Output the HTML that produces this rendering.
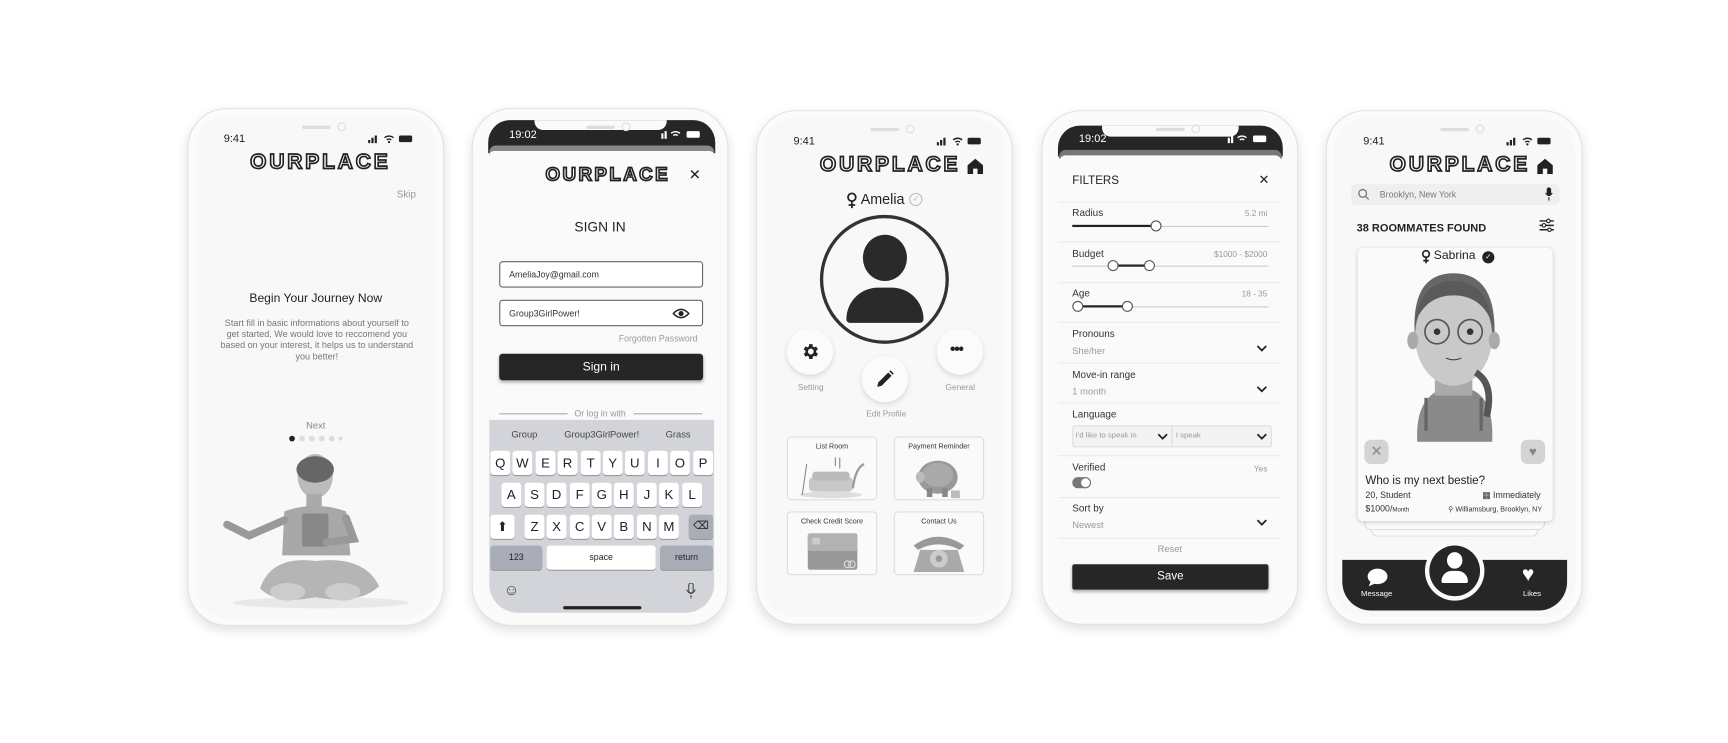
<!DOCTYPE html>
<html><head><meta charset="utf-8">
<style>
*{box-sizing:border-box;margin:0;padding:0}
html,body{width:1728px;height:743px;overflow:hidden;background:#fff;font-family:"Liberation Sans",sans-serif;color:#333}
#w{position:absolute;left:0;top:0;width:1568px;height:674px;transform:scale(1.10204);transform-origin:0 0}
.ph{position:absolute;top:98px;width:233px;height:470px;border-radius:36px;background:#f8f8f8;border:1px solid #e2e2e2;box-shadow:0 4px 10px rgba(0,0,0,.12),inset 0 0 0 6px #fbfbfb;overflow:hidden}
.a{position:absolute}
.t{position:absolute;white-space:nowrap}
.logo{position:absolute;font:900 19px "Liberation Sans",sans-serif;letter-spacing:2.6px;color:#fff;-webkit-text-stroke:1.5px #222}
.pill{position:absolute;top:15px;left:103px;width:26px;height:3px;border-radius:2px;background:#ddd}
.cam{position:absolute;top:12px;left:135px;width:8px;height:8px;border-radius:50%;border:1px solid #ddd}
.time{position:absolute;font-size:10px;color:#222}
.line{position:absolute;left:14px;right:14px;height:1px;background:#ebebeb}
.lbl{position:absolute;font-size:9px;color:#333}
.sub{position:absolute;font-size:9px;color:#999}
.val{position:absolute;font-size:7.5px;color:#999;right:27px}
.knob{position:absolute;width:10px;height:10px;border-radius:50%;background:#fff;border:1px solid #555}
.key{position:absolute;width:18px;height:22px;background:#fff;border-radius:3px;box-shadow:0 1px 0 #999;font-size:12px;text-align:center;line-height:22px;color:#222}
.card{position:absolute;width:82px;height:58px;border:1px solid #ddd;border-radius:4px;background:#fafafa;font-size:6.5px;text-align:center;color:#333;padding-top:5px}
.cb{position:absolute;width:42px;height:42px;border-radius:50%;background:#fbfbfb;box-shadow:0 2px 5px rgba(0,0,0,.13)}
</style></head><body><div id="w">

<!-- PHONE 1 -->
<div class="ph" style="left:170px">
 <div class="pill"></div><div class="cam"></div>
 <div class="time" style="left:32px;top:22px">9:41</div>
 <svg class="a" style="left:163px;top:23px" width="42" height="8"><rect x="0" y="5" width="2" height="3" fill="#222"/><rect x="3" y="3" width="2" height="5" fill="#222"/><rect x="6" y="1" width="2" height="7" fill="#222"/><path d="M15 3a6 6 0 0 1 8 0M17 5a3 3 0 0 1 4 0" stroke="#222" fill="none" stroke-width="1.3"/><circle cx="19" cy="7" r="1" fill="#222"/><rect x="28" y="1" width="12" height="6" rx="1.5" fill="#222"/></svg>
 <div class="logo" style="left:56px;top:38px">OURPLACE</div>
 <div class="t" style="left:189px;top:72px;font-size:9px;color:#999">Skip</div>
 <div class="t" style="left:0;width:231px;text-align:center;top:166px;font-size:11px;color:#222">Begin Your Journey Now</div>
 <div class="a" style="left:28px;width:177px;text-align:center;top:190px;font-size:8.2px;line-height:10px;color:#777">Start fill in basic informations about yourself to get started. We would love to reccomend you based on your interest, it helps us to understand you better!</div>
 <div class="t" style="left:0;width:231px;text-align:center;top:282px;font-size:8.5px;color:#888">Next</div>
 <svg class="a" style="left:90px;top:295px" width="50" height="8"><circle cx="4" cy="4" r="2.6" fill="#222"/><circle cx="13" cy="4" r="2.6" fill="#ddd"/><circle cx="22" cy="4" r="2.6" fill="#ddd"/><circle cx="31" cy="4" r="2.6" fill="#ddd"/><circle cx="40" cy="4" r="2.6" fill="#ddd"/><circle cx="48" cy="4" r="1.8" fill="#ddd"/></svg>
 <svg class="a" style="left:25px;top:305px" width="180" height="150">
  <ellipse cx="95" cy="143" rx="80" ry="5" fill="#e8e8e8"/>
  <ellipse cx="90" cy="28" rx="16" ry="20" fill="#bbb"/><ellipse cx="90" cy="22" rx="17" ry="12" fill="#666"/>
  <rect x="82" y="44" width="14" height="12" fill="#aaa"/>
  <path d="M62 60 Q90 50 118 60 L122 100 L60 100Z" fill="#a8a8a8"/>
  <rect x="78" y="62" width="24" height="30" rx="2" fill="#888"/>
  <path d="M62 68 L30 82 L10 72" stroke="#999" stroke-width="7" fill="none" stroke-linecap="round"/>
  <path d="M118 66 L125 85 L100 88" stroke="#999" stroke-width="7" fill="none" stroke-linecap="round"/>
  <path d="M40 130 Q50 100 90 105 Q135 100 148 128 Q130 145 90 138 Q55 145 40 130Z" fill="#b5b5b5"/>
  <ellipse cx="65" cy="133" rx="16" ry="8" fill="#ccc"/><ellipse cx="115" cy="133" rx="16" ry="8" fill="#ccc"/>
 </svg>
</div>

<!-- PHONE 2 -->
<div class="ph" style="left:428px;background:#fafafa">
 <div class="a" style="left:14px;top:10px;width:206px;height:30px;background:#262626;border-radius:20px 20px 0 0"></div>
 <div class="a" style="left:56px;top:10px;width:120px;height:9px;background:#fafafa;border-radius:0 0 8px 8px"></div>
 <div class="pill"></div><div class="cam"></div>
 <div class="time" style="left:33px;top:18px;color:#fff">19:02</div>
 <svg class="a" style="left:171px;top:19px" width="36" height="8"><rect x="0" y="3" width="2" height="5" fill="#fff"/><rect x="3" y="1" width="2" height="7" fill="#fff"/><path d="M9 3a6 6 0 0 1 8 0M11 5a3 3 0 0 1 4 0" stroke="#fff" fill="none" stroke-width="1.3"/><rect x="23" y="1" width="12" height="6" rx="1.5" fill="#fff"/></svg>
 <div class="a" style="left:15px;top:33px;width:204px;height:9px;background:#888;border-radius:6px 6px 0 0"></div>
 <div class="a" style="left:15px;top:38px;width:204px;height:420px;background:#fafafa;border-radius:4px 4px 0 0"></div>
 <div class="logo" style="left:66px;top:50px;font-size:17px;letter-spacing:2.2px">OURPLACE</div>
 <div class="t" style="left:196px;top:52px;font-size:13px;color:#222">✕</div>
 <div class="t" style="left:0;width:231px;text-align:center;top:100px;font-size:12.5px;color:#222">SIGN IN</div>
 <div class="a" style="left:24px;top:138px;width:185px;height:24px;border:1px solid #666;border-radius:3px;font-size:8px;padding:7px 8px;color:#333;background:#fff">AmeliaJoy@gmail.com</div>
 <div class="a" style="left:24px;top:173px;width:185px;height:24px;border:1px solid #666;border-radius:3px;font-size:8px;padding:7px 8px;color:#333;background:#fff">Group3GirlPower!</div>
 <svg class="a" style="left:181px;top:180px" width="16" height="11"><path d="M1 5.5Q8 -2 15 5.5Q8 13 1 5.5Z" fill="none" stroke="#222" stroke-width="1.4"/><circle cx="8" cy="5.5" r="2.3" fill="#222"/></svg>
 <div class="t" style="right:27px;top:204px;font-size:8px;color:#999">Forgotten Password</div>
 <div class="a" style="left:24px;top:222px;width:185px;height:24px;background:#262626;border-radius:3px;color:#fff;font-size:11px;text-align:center;line-height:24px;box-shadow:0 2px 3px rgba(0,0,0,.3)">Sign in</div>
 <div class="a" style="left:24px;top:276px;width:62px;height:1px;background:#aaa"></div>
 <div class="a" style="left:146px;top:276px;width:62px;height:1px;background:#aaa"></div>
 <div class="t" style="left:0;width:231px;text-align:center;top:272px;font-size:8px;color:#999">Or log in with</div>
 <div class="a" style="left:15px;top:282px;width:204px;height:175px;background:#d2d4d9;border-radius:0 0 26px 26px"></div>
 <div class="t" style="left:35px;top:290px;font-size:8.5px;color:#444">Group</div>
 <div class="t" style="left:83px;top:290px;font-size:8.5px;color:#444">Group3GirlPower!</div>
 <div class="t" style="left:175px;top:290px;font-size:8.5px;color:#444">Grass</div>
 <div class="key" style="left:16px;top:310px">Q</div><div class="key" style="left:36px;top:310px">W</div><div class="key" style="left:57px;top:310px">E</div><div class="key" style="left:77px;top:310px">R</div><div class="key" style="left:98px;top:310px">T</div><div class="key" style="left:118px;top:310px">Y</div><div class="key" style="left:138px;top:310px">U</div><div class="key" style="left:159px;top:310px">I</div><div class="key" style="left:179px;top:310px">O</div><div class="key" style="left:200px;top:310px">P</div>
 <div class="key" style="left:26px;top:339px">A</div><div class="key" style="left:47px;top:339px">S</div><div class="key" style="left:67px;top:339px">D</div><div class="key" style="left:88px;top:339px">F</div><div class="key" style="left:108px;top:339px">G</div><div class="key" style="left:128px;top:339px">H</div><div class="key" style="left:149px;top:339px">J</div><div class="key" style="left:169px;top:339px">K</div><div class="key" style="left:190px;top:339px">L</div>
 <div class="key" style="left:16px;top:368px;width:22px">⬆</div>
 <div class="key" style="left:47px;top:368px">Z</div><div class="key" style="left:67px;top:368px">X</div><div class="key" style="left:88px;top:368px">C</div><div class="key" style="left:108px;top:368px">V</div><div class="key" style="left:128px;top:368px">B</div><div class="key" style="left:149px;top:368px">N</div><div class="key" style="left:169px;top:368px">M</div>
 <div class="key" style="left:196px;top:368px;width:22px;background:#a9adb7;font-size:10px">⌫</div>
 <div class="key" style="left:16px;top:396px;width:47px;background:#a9adb7;font-size:8px">123</div>
 <div class="key" style="left:67px;top:396px;width:99px;font-size:8px">space</div>
 <div class="key" style="left:170px;top:396px;width:48px;background:#a9adb7;font-size:8px">return</div>
 <div class="t" style="left:28px;top:428px;font-size:14px;color:#444">☺</div>
 <svg class="a" style="left:193px;top:430px" width="10" height="15"><rect x="3" y="0" width="4" height="9" rx="2" fill="none" stroke="#444"/><path d="M1 6Q5 13 9 6M5 11v3" stroke="#444" fill="none"/></svg>
 <div class="a" style="left:82px;top:451px;width:71px;height:3px;background:#222;border-radius:2px"></div>
</div>

<!-- PHONE 3 -->
<div class="ph" style="left:686px;top:100px;height:467px">
 <div class="pill"></div><div class="cam"></div>
 <div class="time" style="left:33px;top:22px">9:41</div>
 <svg class="a" style="left:163px;top:23px" width="42" height="8"><rect x="0" y="5" width="2" height="3" fill="#222"/><rect x="3" y="3" width="2" height="5" fill="#222"/><rect x="6" y="1" width="2" height="7" fill="#222"/><path d="M15 3a6 6 0 0 1 8 0M17 5a3 3 0 0 1 4 0" stroke="#222" fill="none" stroke-width="1.3"/><circle cx="19" cy="7" r="1" fill="#222"/><rect x="28" y="1" width="12" height="6" rx="1.5" fill="#222"/></svg>
 <div class="logo" style="left:57px;top:38px">OURPLACE</div>
 <svg class="a" style="left:190px;top:42px" width="16" height="15"><path d="M1 7L8 1L15 7V15H10V10H6V15H1Z" fill="#222"/></svg>
 <svg class="a" style="left:80px;top:73px" width="12" height="15"><circle cx="6" cy="5" r="3.5" fill="none" stroke="#222" stroke-width="1.6"/><path d="M6 9v6M3 12h6" stroke="#222" stroke-width="1.6"/></svg>
 <div class="t" style="left:94px;top:72px;font-size:13px;color:#222">Amelia</div>
 <div class="a" style="left:138px;top:74px;width:12px;height:12px;border:1px solid #bbb;border-radius:50%;font-size:8px;color:#bbb;text-align:center;line-height:10px">✓</div>
 <div class="a" style="left:57px;top:94px;width:117px;height:117px;border:3px solid #333;border-radius:50%;background:#f8f8f8"></div>
 <div class="a" style="left:96px;top:112px;width:40px;height:42px;border-radius:50%;background:#2a2a2a"></div>
 <div class="a" style="left:81px;top:160px;width:70px;height:32px;border-radius:35px 35px 4px 4px;background:#2a2a2a"></div>
 <div class="cb" style="left:27px;top:197px"></div>
 <svg class="a" style="left:39px;top:209px" width="18" height="18" viewBox="0 0 24 24"><path fill="#222" d="M19.4 13a7.8 7.8 0 0 0 0-2l2.1-1.6-2-3.5-2.5 1a7.6 7.6 0 0 0-1.7-1L15 3h-4l-.4 2.9a7.6 7.6 0 0 0-1.7 1l-2.5-1-2 3.5L6.6 11a7.8 7.8 0 0 0 0 2l-2.1 1.6 2 3.5 2.5-1a7.6 7.6 0 0 0 1.7 1L11 21h4l.4-2.9a7.6 7.6 0 0 0 1.7-1l2.5 1 2-3.5zM13 15.5A3.5 3.5 0 1 1 13 8.5a3.5 3.5 0 0 1 0 7z"/></svg>
 <div class="cb" style="left:95px;top:222px"></div>
 <svg class="a" style="left:107px;top:234px" width="18" height="18"><path d="M2 16L3 12L12 3L15 6L6 15Z M13 2L14 1L17 4L16 5Z" fill="#222"/></svg>
 <div class="cb" style="left:163px;top:197px"></div>
 <div class="t" style="left:175px;top:207px;font-size:14px;font-weight:bold;color:#222;letter-spacing:-1px">•••</div>
 <div class="t" style="left:37px;top:246px;font-size:7.5px;color:#999">Setting</div>
 <div class="t" style="left:99px;top:270px;font-size:7.5px;color:#999">Edit Profile</div>
 <div class="t" style="left:171px;top:246px;font-size:7.5px;color:#999">General</div>
 <div class="card" style="left:27px;top:295px">List Room
  <svg style="display:block;margin:4px auto 0" width="62" height="40"><ellipse cx="30" cy="36" rx="28" ry="3" fill="#ddd"/><rect x="10" y="20" width="40" height="13" rx="4" fill="#c8c8c8"/><rect x="13" y="15" width="34" height="8" rx="3" fill="#bbb"/><path d="M50 30Q52 12 60 8" stroke="#999" fill="none" stroke-width="2"/><path d="M4 36L8 8" stroke="#888"/><path d="M34 2v8M38 2v10" stroke="#888"/></svg></div>
 <div class="card" style="left:124px;top:295px">Payment Reminder
  <svg style="display:block;margin:2px auto 0" width="62" height="44"><ellipse cx="30" cy="22" rx="18" ry="15" fill="#999"/><ellipse cx="30" cy="20" rx="14" ry="11" fill="#aaa"/><ellipse cx="14" cy="22" rx="4" ry="5" fill="#bbb"/><rect x="20" y="32" width="5" height="8" fill="#888"/><rect x="34" y="32" width="5" height="8" fill="#888"/><rect x="42" y="34" width="8" height="7" fill="#bbb"/></svg></div>
 <div class="card" style="left:27px;top:363px">Check Credit Score
  <svg style="display:block;margin:4px auto 0" width="62" height="42"><rect x="9" y="3" width="45" height="33" rx="2" fill="#999"/><rect x="9" y="3" width="45" height="16" rx="2" fill="#b2b2b2"/><rect x="13" y="7" width="7" height="6" fill="#ccc"/><circle cx="45" cy="31" r="3" fill="none" stroke="#ddd"/><circle cx="49" cy="31" r="3" fill="none" stroke="#ddd"/></svg></div>
 <div class="card" style="left:124px;top:363px">Contact Us
  <svg style="display:block;margin:4px auto 0" width="62" height="42"><path d="M8 14Q30 -2 54 14L50 18Q30 8 12 18Z" fill="#999"/><path d="M14 18H48L54 38H8Z" fill="#aaa"/><circle cx="31" cy="26" r="8" fill="#ccc"/><circle cx="31" cy="26" r="3" fill="#999"/></svg></div>
</div>

<!-- PHONE 4 -->
<div class="ph" style="left:945px;top:100px;height:467px;background:#fafafa">
 <div class="a" style="left:14px;top:13px;width:204px;height:28px;background:#262626;border-radius:20px 20px 0 0"></div>
 <div class="a" style="left:54px;top:13px;width:124px;height:10px;background:#fafafa;border-radius:0 0 8px 8px"></div>
 <div class="pill"></div><div class="cam"></div>
 <div class="time" style="left:33px;top:20px;color:#fff">19:02</div>
 <svg class="a" style="left:168px;top:21px" width="36" height="8"><rect x="0" y="3" width="2" height="5" fill="#fff"/><rect x="3" y="1" width="2" height="7" fill="#fff"/><path d="M9 3a6 6 0 0 1 8 0M11 5a3 3 0 0 1 4 0" stroke="#fff" fill="none" stroke-width="1.3"/><rect x="23" y="1" width="12" height="6" rx="1.5" fill="#fff"/></svg>
 <div class="a" style="left:15px;top:35px;width:202px;height:8px;background:#777;border-radius:6px 6px 0 0"></div>
 <div class="a" style="left:15px;top:40px;width:202px;height:420px;background:#fafafa;border-radius:6px 6px 0 0"></div>
 <div class="t" style="left:27px;top:57px;font-size:10.5px;color:#222">FILTERS</div>
 <div class="t" style="left:196px;top:55px;font-size:12px;color:#222">✕</div>
 <div class="line" style="top:82px"></div>
 <div class="lbl" style="left:27px;top:87px">Radius</div><div class="val" style="top:88px">5.2 mi</div>
 <div class="a" style="left:27px;top:104px;width:178px;height:1px;background:#ccc"></div>
 <div class="a" style="left:27px;top:103px;width:76px;height:2px;background:#222"></div>
 <div class="knob" style="left:98px;top:99px"></div>
 <div class="line" style="top:118px"></div>
 <div class="lbl" style="left:27px;top:124px">Budget</div><div class="val" style="top:125px">$1000 - $2000</div>
 <div class="a" style="left:27px;top:140px;width:178px;height:1px;background:#ccc"></div>
 <div class="a" style="left:64px;top:139px;width:33px;height:2px;background:#222"></div>
 <div class="knob" style="left:59px;top:135px"></div><div class="knob" style="left:92px;top:135px"></div>
 <div class="line" style="top:155px"></div>
 <div class="lbl" style="left:27px;top:160px">Age</div><div class="val" style="top:161px">18 - 35</div>
 <div class="a" style="left:27px;top:177px;width:178px;height:1px;background:#ccc"></div>
 <div class="a" style="left:32px;top:176px;width:45px;height:2px;background:#222"></div>
 <div class="knob" style="left:27px;top:172px"></div><div class="knob" style="left:72px;top:172px"></div>
 <div class="line" style="top:191px"></div>
 <div class="lbl" style="left:27px;top:197px">Pronouns</div><div class="sub" style="left:27px;top:212px;font-size:8.5px">She/her</div>
 <svg class="a" style="left:194px;top:212px" width="10" height="7"><path d="M1 1L5 5L9 1" stroke="#222" stroke-width="1.6" fill="none"/></svg>
 <div class="line" style="top:228px"></div>
 <div class="lbl" style="left:27px;top:234px">Move-in range</div><div class="sub" style="left:27px;top:249px;font-size:8.5px">1 month</div>
 <svg class="a" style="left:194px;top:249px" width="10" height="7"><path d="M1 1L5 5L9 1" stroke="#222" stroke-width="1.6" fill="none"/></svg>
 <div class="line" style="top:264px"></div>
 <div class="lbl" style="left:27px;top:270px">Language</div>
 <div class="a" style="left:27px;top:285px;width:181px;height:20px;border:1px solid #ddd;background:#f3f3f3;border-radius:2px"></div>
 <div class="a" style="left:117px;top:285px;width:1px;height:20px;background:#ddd"></div>
 <div class="sub" style="left:30px;top:291px;font-size:7px">I'd like to speak in</div>
 <div class="sub" style="left:121px;top:291px;font-size:7px">I speak</div>
 <svg class="a" style="left:104px;top:292px" width="10" height="7"><path d="M1 1L5 5L9 1" stroke="#222" stroke-width="1.6" fill="none"/></svg>
 <svg class="a" style="left:194px;top:292px" width="10" height="7"><path d="M1 1L5 5L9 1" stroke="#222" stroke-width="1.6" fill="none"/></svg>
 <div class="line" style="top:312px"></div>
 <div class="lbl" style="left:27px;top:318px">Verified</div><div class="val" style="top:320px">Yes</div>
 <div class="a" style="left:27px;top:332px;width:17px;height:10px;border-radius:5px;background:#777"></div>
 <div class="a" style="left:34px;top:332px;width:10px;height:10px;border-radius:50%;background:#fff;border:1px solid #777"></div>
 <div class="line" style="top:350px"></div>
 <div class="lbl" style="left:27px;top:355px">Sort by</div><div class="sub" style="left:27px;top:370px;font-size:8.5px">Newest</div>
 <svg class="a" style="left:194px;top:370px" width="10" height="7"><path d="M1 1L5 5L9 1" stroke="#222" stroke-width="1.6" fill="none"/></svg>
 <div class="line" style="top:387px"></div>
 <div class="t" style="left:0;width:231px;text-align:center;top:392px;font-size:8.5px;color:#999">Reset</div>
 <div class="a" style="left:27px;top:411px;width:178px;height:23px;background:#262626;border-radius:2px;color:#fff;font-size:10.5px;text-align:center;line-height:23px;box-shadow:0 2px 3px rgba(0,0,0,.3)">Save</div>
</div>

<!-- PHONE 5 -->
<div class="ph" style="left:1203px;top:100px;height:467px">
 <div class="pill"></div><div class="cam"></div>
 <div class="time" style="left:33px;top:22px">9:41</div>
 <svg class="a" style="left:163px;top:23px" width="42" height="8"><rect x="0" y="5" width="2" height="3" fill="#222"/><rect x="3" y="3" width="2" height="5" fill="#222"/><rect x="6" y="1" width="2" height="7" fill="#222"/><path d="M15 3a6 6 0 0 1 8 0M17 5a3 3 0 0 1 4 0" stroke="#222" fill="none" stroke-width="1.3"/><circle cx="19" cy="7" r="1" fill="#222"/><rect x="28" y="1" width="12" height="6" rx="1.5" fill="#222"/></svg>
 <div class="logo" style="left:57px;top:38px">OURPLACE</div>
 <svg class="a" style="left:190px;top:42px" width="16" height="15"><path d="M1 7L8 1L15 7V15H10V10H6V15H1Z" fill="#222"/></svg>
 <div class="a" style="left:22px;top:66px;width:189px;height:19px;background:#efefef;border-radius:4px"></div>
 <svg class="a" style="left:28px;top:70px" width="11" height="11"><circle cx="4.5" cy="4.5" r="3.5" fill="none" stroke="#777" stroke-width="1.2"/><path d="M7 7L10 10" stroke="#777" stroke-width="1.2"/></svg>
 <div class="t" style="left:48px;top:71px;font-size:8px;color:#777">Brooklyn, New York</div>
 <svg class="a" style="left:198px;top:69px" width="7" height="12"><rect x="1.5" y="0" width="4" height="7" rx="2" fill="#222"/><path d="M0.5 5Q3.5 10 6.5 5M3.5 9v3" stroke="#222" fill="none"/></svg>
 <div class="t" style="left:27px;top:101px;font-size:10px;color:#222;font-weight:bold">38 ROOMMATES FOUND</div>
 <svg class="a" style="left:193px;top:97px" width="13" height="13"><path d="M0 2.5h13M0 6.5h13M0 10.5h13" stroke="#222" stroke-width="1.3"/><circle cx="8" cy="2.5" r="1.6" fill="#fff" stroke="#222"/><circle cx="4" cy="6.5" r="1.6" fill="#fff" stroke="#222"/><circle cx="9" cy="10.5" r="1.6" fill="#fff" stroke="#222"/></svg>
 <div class="a" style="left:40px;top:370px;width:152px;height:16px;border:1px solid #ddd;border-top:none;border-radius:0 0 6px 6px;background:#fafafa"></div>
 <div class="a" style="left:34px;top:366px;width:164px;height:14px;border:1px solid #ddd;border-top:none;border-radius:0 0 6px 6px;background:#fafafa"></div>
 <div class="a" style="left:28px;top:124px;width:177px;height:248px;background:#fafafa;border-radius:5px;box-shadow:0 1px 4px rgba(0,0,0,.18)"></div>
 <svg class="a" style="left:85px;top:125px" width="10" height="13"><circle cx="5" cy="4.5" r="3" fill="none" stroke="#222" stroke-width="1.5"/><path d="M5 8v5M2.5 10.5h5" stroke="#222" stroke-width="1.5"/></svg>
 <div class="t" style="left:97px;top:125px;font-size:11px;color:#222">Sabrina</div>
 <div class="a" style="left:141px;top:127px;width:11px;height:11px;border-radius:50%;background:#222;color:#fff;font-size:7px;text-align:center;line-height:11px">✓</div>
 <svg class="a" style="left:60px;top:142px" width="110" height="158">
  <path d="M22 158 Q20 118 45 110 L70 110 Q92 118 90 158Z" fill="#8a8a8a"/>
  <rect x="38" y="100" width="34" height="16" fill="#aaa"/>
  <path d="M20 65 Q15 5 55 5 Q95 5 92 65" fill="#666"/>
  <ellipse cx="55" cy="62" rx="35" ry="45" fill="#c9c9c9"/>
  <path d="M20 50Q25 12 55 12Q85 12 90 50Q80 25 55 25Q30 25 20 50Z" fill="#5a5a5a"/>
  <circle cx="40" cy="58" r="11" fill="none" stroke="#555" stroke-width="1.5"/><circle cx="70" cy="58" r="11" fill="none" stroke="#555" stroke-width="1.5"/>
  <circle cx="40" cy="58" r="3" fill="#333"/><circle cx="70" cy="58" r="3" fill="#333"/>
  <path d="M48 82Q55 85 62 82" stroke="#444" fill="none"/>
  <ellipse cx="18" cy="66" rx="5" ry="8" fill="#aaa"/><ellipse cx="92" cy="66" rx="5" ry="8" fill="#aaa"/>
  <path d="M30 118v30M80 118v30" stroke="#666" stroke-width="3"/>
  <path d="M75 95Q92 105 85 135" stroke="#555" stroke-width="6" fill="none"/>
 </svg>
 <div class="a" style="left:34px;top:298px;width:22px;height:22px;border-radius:6px;background:#d4d4d4;color:#888;font-size:13px;text-align:center;line-height:22px">✕</div>
 <div class="a" style="left:176px;top:298px;width:22px;height:22px;border-radius:6px;background:#d4d4d4;color:#888;font-size:12px;text-align:center;line-height:22px">♥</div>
 <div class="t" style="left:35px;top:329px;font-size:10.5px;color:#222">Who is my next bestie?</div>
 <div class="t" style="left:35px;top:344px;font-size:8px;color:#333">20, Student</div>
 <div class="t" style="left:141px;top:344px;font-size:8px;color:#333">▦ Immediately</div>
 <div class="t" style="left:35px;top:356px;font-size:8px;color:#333">$1000/<span style="font-size:5.5px">Month</span></div>
 <div class="t" style="left:110px;top:357px;font-size:6.5px;color:#333">⚲ Williamsburg, Brooklyn, NY</div>
 <div class="a" style="left:14px;top:407px;width:204px;height:46px;background:#262626;border-radius:0 0 26px 26px"></div>
 <div class="a" style="left:89px;top:390px;width:54px;height:54px;border-radius:50%;background:#fafafa"></div>
 <div class="a" style="left:93px;top:394px;width:46px;height:46px;border-radius:50%;background:#262626"></div>
 <div class="a" style="left:109px;top:400px;width:14px;height:15px;border-radius:50%;background:#fff"></div>
 <div class="a" style="left:104px;top:417px;width:24px;height:11px;border-radius:12px 12px 2px 2px;background:#fff"></div>
 <svg class="a" style="left:36px;top:414px" width="20" height="18"><ellipse cx="10" cy="8" rx="9" ry="7" fill="#fff"/><path d="M4 12L2 17L9 14Z" fill="#fff"/></svg>
 <div class="t" style="left:31px;top:435px;font-size:7px;color:#fff">Message</div>
 <div class="t" style="left:177px;top:410px;font-size:19px;color:#fff">♥</div>
 <div class="t" style="left:178px;top:435px;font-size:7px;color:#fff">Likes</div>
</div>

</div></body></html>
